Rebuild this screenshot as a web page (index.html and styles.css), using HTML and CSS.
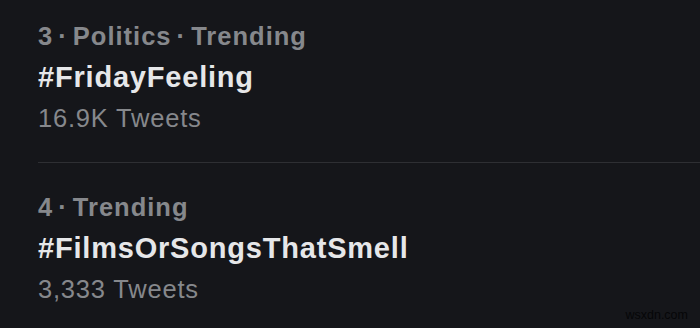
FILE: index.html
```html
<!DOCTYPE html>
<html lang="en">
<head>
<meta charset="utf-8">
<title>Trends</title>
<link rel="stylesheet" href="styles.css">
</head>
<body>
<div class="trends">
  <div class="trend">
    <div class="meta">3 · Politics · Trending</div>
    <div class="tag">#FridayFeeling</div>
    <div class="count">16.9K Tweets</div>
  </div>
  <div class="trend">
    <div class="meta">4 · Trending</div>
    <div class="tag">#FilmsOrSongsThatSmell</div>
    <div class="count">3,333 Tweets</div>
  </div>
</div>
<div class="watermark">wsxdn.com</div>
</body>
</html>
```
FILE: styles.css
```css
html, body {
  margin: 0;
  padding: 0;
  background: #15161a;
  height: 100%;
  overflow: hidden;
}
body {
  font-family: "Liberation Sans", Arial, sans-serif;
  position: relative;
}
.trends {
  display: flex;
  flex-direction: column;
  margin-top: -8px;
  margin-left: 38px;
}
.trend {
  padding: 24px 0 24px 0;
  border-bottom: 1px solid #2e2f33;
}
.trend:last-child {
  border-bottom: none;
}
.meta {
  font-size: 25.5px;
  line-height: 40px;
  font-weight: 700;
  color: #86888c;
  letter-spacing: 1px;
  word-spacing: -3px;
}
.tag {
  font-size: 29px;
  line-height: 42px;
  font-weight: 700;
  color: #e6e7e9;
  letter-spacing: 0.8px;
}
.count {
  font-size: 25.5px;
  line-height: 40px;
  color: #86888c;
  letter-spacing: 0.8px;
}
.watermark {
  position: absolute;
  right: 12px;
  bottom: 6px;
  font-size: 12.5px;
  color: #060608;
}
```
